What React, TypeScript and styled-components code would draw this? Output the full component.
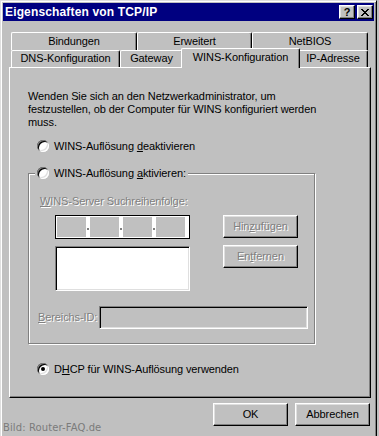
import React from 'react';
import styled, { createGlobalStyle, css } from 'styled-components';

const GlobalStyle = createGlobalStyle`
  html, body {
    margin: 0;
    padding: 0;
    background: #c0c0c0;
    overflow: hidden;
  }
  body {
    font-family: "Liberation Sans", Arial, sans-serif;
    font-size: 11px;
    letter-spacing: -0.1px;
    color: #000;
  }
  * {
    box-sizing: border-box;
  }
`;

const raised = css`
  border: 1px solid;
  border-color: #fff #000 #000 #fff;
  box-shadow: inset -1px -1px #808080, inset 1px 1px #dfdfdf;
`;

const sunken = css`
  border: 1px solid;
  border-color: #808080 #fff #fff #808080;
  box-shadow: inset 1px 1px #000, inset -1px -1px #dfdfdf;
`;

const disabledText = css`
  color: #808080;
  text-shadow: 1px 1px 0 #fff;
`;

const Window = styled.div`
  position: relative;
  width: 377px;
  height: 450px;
  padding: 2px;
  border: 1px solid;
  border-color: #dfdfdf #000 #000 #dfdfdf;
  box-shadow: inset 1px 1px #fff, inset -1px -1px #808080;
  background: #c0c0c0;
`;

const TitleBar = styled.div`
  display: flex;
  align-items: center;
  height: 18px;
  padding: 0 1px 0 2px;
  background: #000080;
  color: #fff;
`;

const TitleText = styled.div`
  flex: 1;
  font-size: 12px;
  font-weight: bold;
  letter-spacing: 0.15px;
  line-height: 13px;
`;

const TitleButtons = styled.div`
  display: flex;
  gap: 2px;
`;

const TitleButton = styled.div`
  ${raised};
  width: 16px;
  height: 14px;
  display: flex;
  align-items: center;
  justify-content: center;
  background: #c0c0c0;
  color: #000;
  font-weight: bold;
  font-size: 11px;
  line-height: 11px;
  letter-spacing: 0;
`;

const Body = styled.div`
  padding-left: 6px;
`;

const Tabs = styled.div`
  margin-top: 11px;
`;

const TabRow = styled.div<{ $h: number }>`
  display: flex;
  height: ${p => p.$h}px;
  padding-left: 2px;
`;

const Tab = styled.div<{ $w: number; $row: 1 | 2; $sel?: boolean }>`
  position: relative;
  width: ${p => p.$w + (p.$sel ? 4 : 0)}px;
  height: ${p => (p.$sel ? 20 : p.$row === 1 ? 18 : 17)}px;
  margin: ${p => (p.$sel ? '-2px -2px -1px -2px' : '0')};
  padding-top: ${p => (p.$row === 1 || p.$sel ? 2 : 1)}px;
  z-index: ${p => (p.$sel ? 2 : 0)};
  border-top: 1px solid #fff;
  border-left: 1px solid #fff;
  border-right: 1px solid #000;
  border-radius: 2px 2px 0 0;
  box-shadow: inset -1px 0 #808080;
  background: #c0c0c0;
  text-align: center;
  line-height: 13px;
  white-space: nowrap;
`;

const Panel = styled.div`
  position: relative;
  width: 362px;
  height: 331px;
  padding: 22px 0 0 18px;
  border: 1px solid;
  border-color: #fff #000 #000 #fff;
  box-shadow: inset -1px -1px #808080;
`;

const Paragraph = styled.p`
  margin: 0;
  line-height: 13px;
`;

const RadioRow = styled.div<{ $mt?: number }>`
  display: flex;
  align-items: center;
  gap: 5px;
  height: 14px;
  margin-left: ${p => (p.$mt === undefined ? 0 : 9)}px;
  margin-top: ${p => p.$mt ?? 0}px;
  line-height: 13px;
  white-space: nowrap;
`;

const Radio = styled.span<{ $checked?: boolean }>`
  position: relative;
  flex: none;
  width: 12px;
  height: 12px;
  border-radius: 50%;
  background: #fff;
  box-shadow: inset 1px 1px #808080, inset -1px -1px #fff, inset 2px 2px #000,
    inset -2px -2px #dfdfdf;

  &::after {
    content: '';
    display: ${p => (p.$checked ? 'block' : 'none')};
    position: absolute;
    left: 4px;
    top: 4px;
    width: 4px;
    height: 4px;
    border-radius: 50%;
    background: #000;
  }
`;

const GroupBox = styled.div`
  position: relative;
  width: 287px;
  margin-top: 20px;
  padding: 21px 0 14px 9px;
  border: 1px solid #808080;
  box-shadow: inset 1px 1px #fff, 1px 1px #fff;
`;

const GroupLegend = styled.div`
  position: absolute;
  top: -8px;
  left: 6px;
  padding: 0 2px;
  background: #c0c0c0;
`;

const DisabledLabel = styled.div`
  ${disabledText};
  margin-left: 2px;
  line-height: 13px;
`;

const ServerGrid = styled.div`
  display: flex;
  gap: 33px;
  margin: 7px 0 0 17px;
`;

const Column = styled.div`
  display: flex;
  flex-direction: column;
  gap: 7px;
`;

const IPBox = styled.div`
  display: flex;
  width: 135px;
  height: 24px;
  padding: 1px;
  border: 1px solid #000;
  background: #fff;
`;

const IPField = styled.div`
  width: 29px;
  background: #c0c0c0;
`;

const IPDot = styled.div`
  display: flex;
  align-items: flex-end;
  justify-content: center;
  width: 4px;
  padding-bottom: 7px;

  &::after {
    content: '';
    width: 2px;
    height: 2px;
    background: #808080;
  }
`;

const ListBox = styled.div`
  ${sunken};
  width: 135px;
  height: 45px;
  background: #fff;
`;

const PushButton = styled.div<{ $disabled?: boolean }>`
  ${raised};
  width: 75px;
  height: 23px;
  display: flex;
  align-items: center;
  justify-content: center;
  background: #c0c0c0;
  line-height: 13px;
  ${p => p.$disabled && disabledText};
`;

const ScopeRow = styled.div`
  display: grid;
  grid-template-columns: 61px 209px;
  align-items: center;
  margin-top: 15px;
`;

const ScopeLabel = styled.div`
  ${disabledText};
  line-height: 13px;
`;

const TextField = styled.div`
  ${sunken};
  height: 23px;
  background: #c0c0c0;
`;

const Footer = styled.div`
  display: flex;
  justify-content: flex-end;
  gap: 7px;
  width: 362px;
  margin-top: 5px;
  padding-right: 1px;
`;

const Watermark = styled.div`
  position: absolute;
  left: 2px;
  top: 421px;
  font-family: "DejaVu Sans", Verdana, sans-serif;
  font-size: 10px;
  line-height: 12px;
  letter-spacing: 0.1px;
  color: #7b7b7b;
`;

const closeRows = ['11000011', '01100110', '00111100', '00011000', '00111100', '01100110', '11000011'];

function CloseGlyph() {
  return (
    <svg width="8" height="7" viewBox="0 0 8 7" shapeRendering="crispEdges">
      {closeRows.map((row, y) =>
        row.split('').map((c, x) => (c === '1' ? <rect key={`${x}-${y}`} x={x} y={y} width="1" height="1" fill="#000" /> : null))
      )}
    </svg>
  );
}

const topTabs = [
  { label: 'Bindungen', w: 126 },
  { label: 'Erweitert', w: 115 },
  { label: 'NetBIOS', w: 116 },
];

const frontTabs = [
  { label: 'DNS-Konfiguration', w: 109 },
  { label: 'Gateway', w: 63 },
  { label: 'WINS-Konfiguration', w: 115, sel: true },
  { label: 'IP-Adresse', w: 70 },
];

export default function App() {
  return (
    <>
      <GlobalStyle />
      <Window>
        <TitleBar>
          <TitleText>Eigenschaften von TCP/IP</TitleText>
          <TitleButtons>
            <TitleButton>?</TitleButton>
            <TitleButton>
              <CloseGlyph />
            </TitleButton>
          </TitleButtons>
        </TitleBar>

        <Body>
          <Tabs>
            <TabRow $h={18}>
              {topTabs.map(t => (
                <Tab key={t.label} $w={t.w} $row={1}>
                  {t.label}
                </Tab>
              ))}
            </TabRow>
            <TabRow $h={17}>
              {frontTabs.map(t => (
                <Tab key={t.label} $w={t.w} $row={2} $sel={t.sel}>
                  {t.label}
                </Tab>
              ))}
            </TabRow>
          </Tabs>

          <Panel>
            <Paragraph>
              Wenden Sie sich an den Netzwerkadministrator, um
              <br />
              festzustellen, ob der Computer für WINS konfiguriert werden
              <br />
              muss.
            </Paragraph>

            <RadioRow $mt={10}>
              <Radio />
              <span>
                WINS-Auflösung <u>d</u>eaktivieren
              </span>
            </RadioRow>

            <GroupBox>
              <GroupLegend>
                <RadioRow>
                  <Radio />
                  <span>
                    WINS-Auflösung <u>a</u>ktivieren:
                  </span>
                </RadioRow>
              </GroupLegend>

              <DisabledLabel>
                <u>W</u>INS-Server Suchreihenfolge:
              </DisabledLabel>

              <ServerGrid>
                <Column>
                  <IPBox>
                    <IPField />
                    <IPDot />
                    <IPField />
                    <IPDot />
                    <IPField />
                    <IPDot />
                    <IPField />
                  </IPBox>
                  <ListBox />
                </Column>
                <Column>
                  <PushButton $disabled>
                    <span>
                      Hin<u>z</u>ufügen
                    </span>
                  </PushButton>
                  <PushButton $disabled>
                    <span>
                      En<u>t</u>fernen
                    </span>
                  </PushButton>
                </Column>
              </ServerGrid>

              <ScopeRow>
                <ScopeLabel>
                  <u>B</u>ereichs-ID:
                </ScopeLabel>
                <TextField />
              </ScopeRow>
            </GroupBox>

            <RadioRow $mt={18}>
              <Radio $checked />
              <span>
                D<u>H</u>CP für WINS-Auflösung verwenden
              </span>
            </RadioRow>
          </Panel>

          <Footer>
            <PushButton>OK</PushButton>
            <PushButton>Abbrechen</PushButton>
          </Footer>
        </Body>

        <Watermark>Bild: Router-FAQ.de</Watermark>
      </Window>
    </>
  );
}
